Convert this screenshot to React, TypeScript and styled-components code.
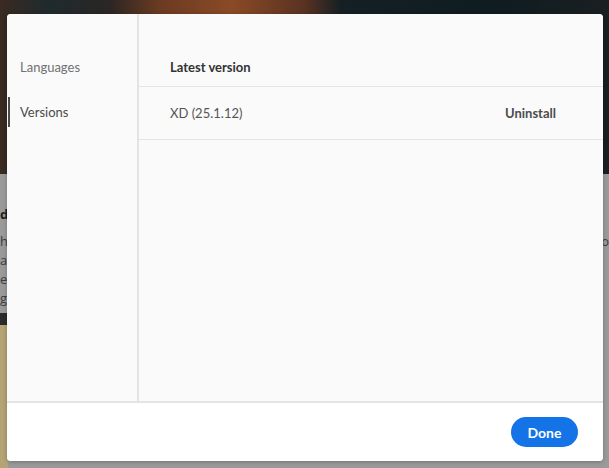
import React from "react";
import styled, { createGlobalStyle } from "styled-components";

const GlobalStyle = createGlobalStyle`
	html, body {
		margin: 0;
		padding: 0;
		background: #9a9a9a;
		font-family: "Lato", "Open Sans", sans-serif;
	}
`;

const App = () => {
	return (
		<Page>
			<GlobalStyle />
			<Backdrop>
				<Hero />
				<BackdropBody>
					<SideText>
						<strong>d</strong>
						<span>h</span>
						<span>a</span>
						<span>ev</span>
						<span>gl</span>
					</SideText>
					<SideText $right>
						<span>no</span>
						<span>u</span>
					</SideText>
				</BackdropBody>
				<DarkBand />
				<Strip />
			</Backdrop>

			<Dialog>
				<Body>
					<Sidebar>
						<NavItem>Languages</NavItem>
						<NavItem $active>Versions</NavItem>
					</Sidebar>
					<Main>
						<HeaderRow>Latest version</HeaderRow>
						<Row>
							<span>XD (25.1.12)</span>
							<Action>Uninstall</Action>
						</Row>
					</Main>
				</Body>
				<Footer>
					<Done>Done</Done>
				</Footer>
			</Dialog>
		</Page>
	);
};

// styles
const Page = styled.div`
	position: relative;
	width: 609px;
	height: 468px;
	overflow: hidden;
	background: #9a9a9a;
`;

const Backdrop = styled.div`
	display: flex;
	flex-direction: column;
	height: 100%;
`;

const Hero = styled.div`
	height: 174px;
	flex-shrink: 0;
	background: linear-gradient(
		90deg,
		#3a2a22 0%,
		#1f2a2d 8%,
		#2a2624 18%,
		#6a3a22 26%,
		#8a4a26 38%,
		#5a3222 50%,
		#142024 56%,
		#0f1c20 80%,
		#1a1f22 100%
	);
`;

const BackdropBody = styled.div`
	height: 139px;
	flex-shrink: 0;
	display: flex;
	justify-content: space-between;
	padding-top: 33px;
	box-sizing: border-box;
`;

const SideText = styled.div<{ $right?: boolean }>`
	display: flex;
	flex-direction: column;
	gap: 4px;
	font-family: "Open Sans", sans-serif;
	font-size: 13px;
	line-height: 15px;
	color: #3d3d3d;
	padding-top: ${(p) => (p.$right ? "27px" : "0")};

	strong {
		color: #1e1e1e;
		margin-bottom: 8px;
	}
`;

const DarkBand = styled.div`
	height: 12px;
	flex-shrink: 0;
	background: linear-gradient(90deg, #2b2b2b 0, #2b2b2b 10px, #9a9a9a 10px);
`;

const Strip = styled.div`
	flex: 1;
	background: linear-gradient(90deg, #b4a374 0, #b4a374 8px, #9a9a9a 8px);
`;

const Dialog = styled.div`
	position: absolute;
	top: 14px;
	left: 7px;
	width: 596px;
	height: 447px;
	display: flex;
	flex-direction: column;
	background: #fff;
	border-radius: 4px;
	overflow: hidden;
	box-shadow: 0 1px 4px rgba(0, 0, 0, 0.25);
`;

const Body = styled.div`
	flex: 1;
	display: flex;
	background: #fafafa;
	border-bottom: 2px solid #e4e4e4;
`;

const Sidebar = styled.nav`
	width: 130px;
	flex-shrink: 0;
	border-right: 2px solid #e4e4e4;
	padding-top: 38px;
	display: flex;
	flex-direction: column;
	gap: 15px;
`;

const NavItem = styled.div<{ $active?: boolean }>`
	height: 30px;
	display: flex;
	align-items: center;
	font-size: 13px;
	color: ${(p) => (p.$active ? "#4b4b4b" : "#707070")};
	box-shadow: ${(p) => (p.$active ? "inset 2px 0 0 #4b4b4b" : "none")};
	margin-left: ${(p) => (p.$active ? "1px" : "0")};
	padding-left: ${(p) => (p.$active ? "12px" : "13px")};
`;

const Main = styled.div`
	flex: 1;
	display: flex;
	flex-direction: column;
`;

const HeaderRow = styled.div`
	height: 73px;
	box-sizing: border-box;
	padding: 45px 0 0 31px;
	font-size: 13px;
	font-weight: 700;
	color: #323232;
	border-bottom: 1px solid #e4e4e4;
	line-height: 16px;
`;

const Row = styled.div`
	height: 53px;
	box-sizing: border-box;
	display: flex;
	align-items: center;
	justify-content: space-between;
	padding: 0 47px 0 31px;
	border-bottom: 1px solid #e4e4e4;
	font-size: 13px;
	color: #555;
`;

const Action = styled.span`
	font-weight: 700;
	color: #4b4b4b;
`;

const Footer = styled.div`
	height: 58px;
	flex-shrink: 0;
	display: flex;
	align-items: center;
	justify-content: flex-end;
	padding-right: 25px;
	background: #fff;
`;

const Done = styled.button`
	width: 67px;
	height: 30px;
	border: none;
	border-radius: 15px;
	background: #1473e6;
	color: #fff;
	font-family: "Lato", sans-serif;
	font-size: 14px;
	font-weight: 700;
	cursor: pointer;
`;

export default App;
